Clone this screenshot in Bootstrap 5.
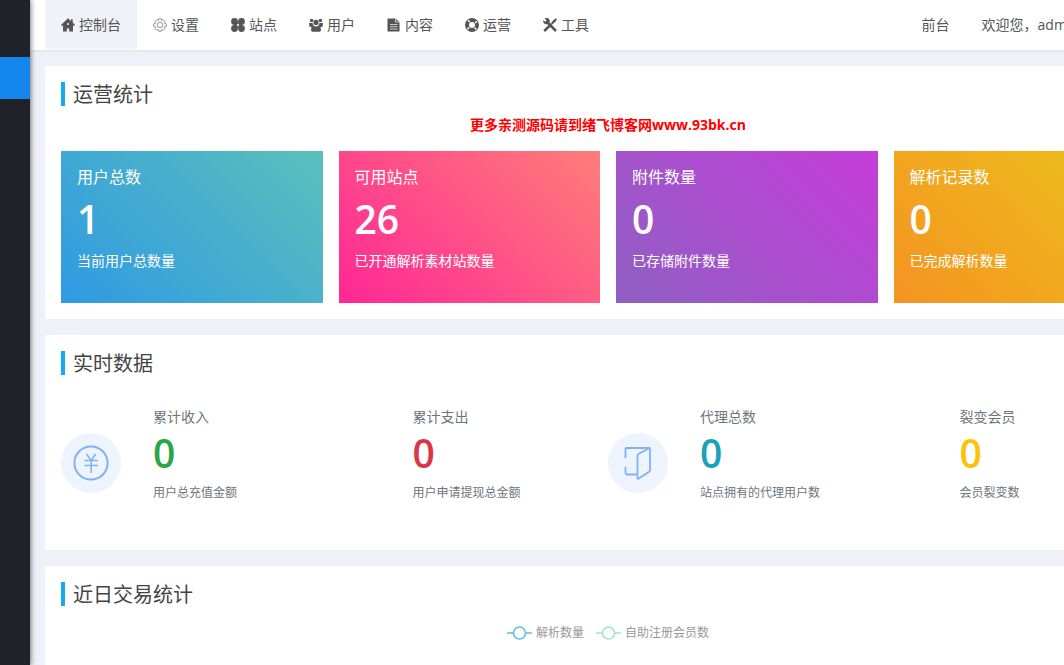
<!DOCTYPE html>
<html lang="zh-CN">
<head>
<meta charset="utf-8">
<meta name="viewport" content="width=device-width, initial-scale=1">
<title>控制台</title>
<link href="https://cdn.jsdelivr.net/npm/bootstrap@5.3.0/dist/css/bootstrap.min.css" rel="stylesheet">
<style>
body{font-family:"Open Sans","Noto Sans CJK SC",sans-serif;font-size:14px;line-height:20px;color:#555;background:#eff0f8}
.side-rail{width:30px;background:#20222a;padding-top:57px;box-shadow:1px 0 5px rgba(0,0,0,.5);z-index:2}
.side-rail a{height:42px;background:#1686ef}
.work-area{min-width:1157px}
.top-bar{height:50px;background:#fff;box-shadow:0 1px 3px rgba(0,0,0,.08);padding-left:15px;padding-right:92px}
.top-bar a{height:49px;padding:0 16px;gap:4px;color:#555;white-space:nowrap}
.top-bar a.active{background:#f0f1f9}
.top-bar svg{width:14px;height:14px;flex:none}
.panels{padding:16px 16px 0 15px}
.panel{background:#fff;padding:16px}
.panel h2{font-size:20px;line-height:26px;height:24px;font-weight:400;color:#444;border-left:4px solid #12aaf5;padding-left:8px;margin:0}
.notice{color:#f00;font-weight:700;padding:9px 0 16px}
.tile{color:#fff;padding:16px 16px 32px}
.tile h3{font-size:16px;line-height:20px;font-weight:400;margin:0}
.figure-num{font-size:39px;line-height:48px;font-weight:600}
.t-blue{background:linear-gradient(45deg,#2f9ae3,#5bc0bb)}
.t-pink{background:linear-gradient(45deg,#ff2796,#ff7d79)}
.t-violet{background:linear-gradient(45deg,#8e60c2,#c63dda)}
.t-amber{background:linear-gradient(45deg,#f59322,#ebc51a)}
.live{padding:32px 0 31px;color:#6c757d}
.live .figure-num{margin:2px 0 6px}
.disc{width:60px;height:60px;border-radius:50%;background:#edf4fe;flex:none;margin:26px 32px 0 0}
.no-disc{padding-left:78px}
.tiny{font-size:12px;line-height:20px}
.c-green{color:#28a745}.c-red{color:#dc3545}.c-teal{color:#1ba2b8}.c-gold{color:#ffc107}
.legend-row{font-size:12px;color:#999;gap:12px;padding:17px 0 80px}
</style>
</head>
<body>
<div class="d-flex vh-100 overflow-hidden">
  <nav class="side-rail flex-shrink-0" aria-label="侧栏"><a href="#" class="d-block" aria-label="控制台"></a></nav>
  <div class="work-area flex-grow-1">
    <header class="top-bar d-flex justify-content-between">
      <nav class="d-flex">
        <a href="#" class="active d-flex align-items-center text-decoration-none"><svg viewBox="0 0 14 14" fill="#555"><path d="M7 .3 10 3V1.300h1.700v3.200L14 7l-.8 1-1.200-.6V13.500H8.200V10.500H5.800v3H2V7.400L.8 8 0 7z"/><circle cx="7" cy="6" r="1" fill="#f0f1f9"/></svg>控制台</a>
        <a href="#" class="d-flex align-items-center text-decoration-none"><svg viewBox="0 0 14 14" fill="none" stroke="#888"><path d="m5.800.7h2.400l.5 1.600 1.600-.5 1.800 1.800-.6 1.600 1.800.7v2.200l-1.800.7.600 1.600-1.800 1.800-1.600-.6-.5 1.700H5.800l-.5-1.700-1.600.6-1.800-1.800.6-1.600L.7 8.100V5.900l1.800-.7-.6-1.600 1.800-1.800 1.600.5z" stroke-width=".9"/><circle cx="7" cy="7" r="2.800" stroke-width=".9"/></svg>设置</a>
        <a href="#" class="d-flex align-items-center text-decoration-none"><svg viewBox="0 0 14 14" fill="#555"><path d="M3.500.1a3.400 3.400 0 0 1 3.400 3.400v3.400H3.500a3.400 3.400 0 0 1 0-6.800M10.500.1a3.400 3.400 0 0 1 0 6.800H7.100V3.500A3.400 3.400 0 0 1 10.500.1M3.500 7.100h3.400v3.400a3.400 3.400 0 1 1-3.400-3.400M7.100 7.100h3.400a3.400 3.400 0 1 1-3.400 3.400z"/><circle cx="7" cy="7" r="1.100" fill="#fff"/></svg>站点</a>
        <a href="#" class="d-flex align-items-center text-decoration-none"><svg viewBox="0 0 14 14" fill="#555"><circle cx="2.600" cy="2.500" r="1.800"/><circle cx="11.400" cy="2.500" r="1.800"/><circle cx="7" cy="4.400" r="2.600"/><path d="M0 5h3.500q.3 1.700 1.300 2.500L2.500 9H1Q0 8 0 5M14 5h-3.500q-.3 1.700-1.300 2.500L11.500 9H13q1-1 1-4M4.500 7.800Q7 9 9.500 7.800 12 8.600 12 11.500q0 2.300-1.500 2.300h-7Q2 13.800 2 11.500q0-2.900 2.500-3.700"/></svg>用户</a>
        <a href="#" class="d-flex align-items-center text-decoration-none"><svg viewBox="0 0 14 14"><path fill="#555" d="M.5.500h8L12.500 4v9.500H.5z"/><path stroke="#fff" stroke-width=".7" fill="none" d="M8.500.5V4h4M3 6.500h7.500M3 8.700h7.500M3 11h7.500"/></svg>内容</a>
        <a href="#" class="d-flex align-items-center text-decoration-none"><svg viewBox="0 0 14 14" fill="none"><circle cx="7" cy="7" r="5" stroke="#555" stroke-width="4"/><circle cx="7" cy="7" r="4.900" stroke="#fff" stroke-width="2.400" stroke-dasharray="1.400 6.297" stroke-dashoffset="-3.150"/></svg>运营</a>
        <a href="#" class="d-flex align-items-center text-decoration-none"><svg viewBox="0 0 14 14" fill="none" stroke="#555"><path stroke-width="2.500" d="M3.500 3.500 13 13M8.500 6 1.200 13"/><path fill="#555" stroke="none" d="M1.800.3A3.200 3.200 0 0 1 6 5 3.300 3.300 0 0 1 .2 2.200l2 1.500 1.300-1.300zM8 5l2.500-3L13 .3 14 1.300 12.200 4 9.200 6.500z"/></svg>工具</a>
      </nav>
      <nav class="d-flex">
        <a href="#" class="d-flex align-items-center text-decoration-none">前台</a>
        <a href="#" class="d-flex align-items-center text-decoration-none">欢迎您，admin</a>
      </nav>
    </header>
    <main class="panels d-flex flex-column gap-3">
      <section class="panel">
        <h2>运营统计</h2>
        <div class="notice text-center">更多亲测源码请到绪飞博客网www.93bk.cn</div>
        <div class="row g-3 mt-0">
          <div class="col-3 mt-0"><div class="tile t-blue d-flex flex-column gap-2"><h3>用户总数</h3><div class="figure-num">1</div><div>当前用户总数量</div></div></div>
          <div class="col-3 mt-0"><div class="tile t-pink d-flex flex-column gap-2"><h3>可用站点</h3><div class="figure-num">26</div><div>已开通解析素材站数量</div></div></div>
          <div class="col-3 mt-0"><div class="tile t-violet d-flex flex-column gap-2"><h3>附件数量</h3><div class="figure-num">0</div><div>已存储附件数量</div></div></div>
          <div class="col-3 mt-0"><div class="tile t-amber d-flex flex-column gap-2"><h3>解析记录数</h3><div class="figure-num">0</div><div>已完成解析数量</div></div></div>
        </div>
      </section>
      <section class="panel">
        <h2>实时数据</h2>
        <div class="live row g-0">
          <div class="col-3 d-flex align-items-start">
            <div class="disc d-flex align-items-center justify-content-center"><svg width="36" height="36" viewBox="0 0 36 36" fill="none" stroke="#82b1f6" stroke-width="1.600"><circle cx="18" cy="18" r="16.600" stroke-width="2"/><path d="m13.500 9 4.700 6.500L22.500 9M11.500 15.500H25M11.500 20.500H25M18.200 15.500V28"/></svg></div>
            <div><div>累计收入</div><div class="figure-num c-green">0</div><div class="tiny">用户总充值金额</div></div>
          </div>
          <div class="col-3 no-disc"><div>累计支出</div><div class="figure-num c-red">0</div><div class="tiny">用户申请提现总金额</div></div>
          <div class="col-3 d-flex align-items-start">
            <div class="disc d-flex align-items-center justify-content-center"><svg width="36" height="36" viewBox="0 0 36 36" fill="none" stroke="#82b1f6" stroke-width="1.800" stroke-linejoin="round" stroke-linecap="round"><path d="M5.500 12.500V4Q5.500 3 6.500 3H29q1 0 1 1v21.500q0 1-1 1.300l-10.500 7q-1 .5-1-.7V10.500q0-1 1-1.500L29.500 3M5.500 22.500V28q0 1.500 1.500 1.500h10.500"/></svg></div>
            <div><div>代理总数</div><div class="figure-num c-teal">0</div><div class="tiny">站点拥有的代理用户数</div></div>
          </div>
          <div class="col-3 no-disc"><div>裂变会员</div><div class="figure-num c-gold">0</div><div class="tiny">会员裂变数</div></div>
        </div>
      </section>
      <section class="panel">
        <h2>近日交易统计</h2>
        <div class="legend-row d-flex justify-content-center">
          <span class="d-flex align-items-center gap-1"><svg width="25" height="14" viewBox="0 0 25 14" fill="none" stroke="#65bbe4" stroke-width="1.600"><path d="M0 7h6.500M18.500 7H25"/><circle cx="12.500" cy="7" r="6"/></svg>解析数量</span>
          <span class="d-flex align-items-center gap-1"><svg width="25" height="14" viewBox="0 0 25 14" fill="none" stroke="#9be6d0" stroke-width="1.600"><path d="M0 7h6.500M18.500 7H25"/><circle cx="12.500" cy="7" r="6"/></svg>自助注册会员数</span>
        </div>
      </section>
    </main>
  </div>
</div>
<script src="https://cdn.jsdelivr.net/npm/bootstrap@5.3.0/dist/js/bootstrap.bundle.min.js"></script>
</body>
</html>
